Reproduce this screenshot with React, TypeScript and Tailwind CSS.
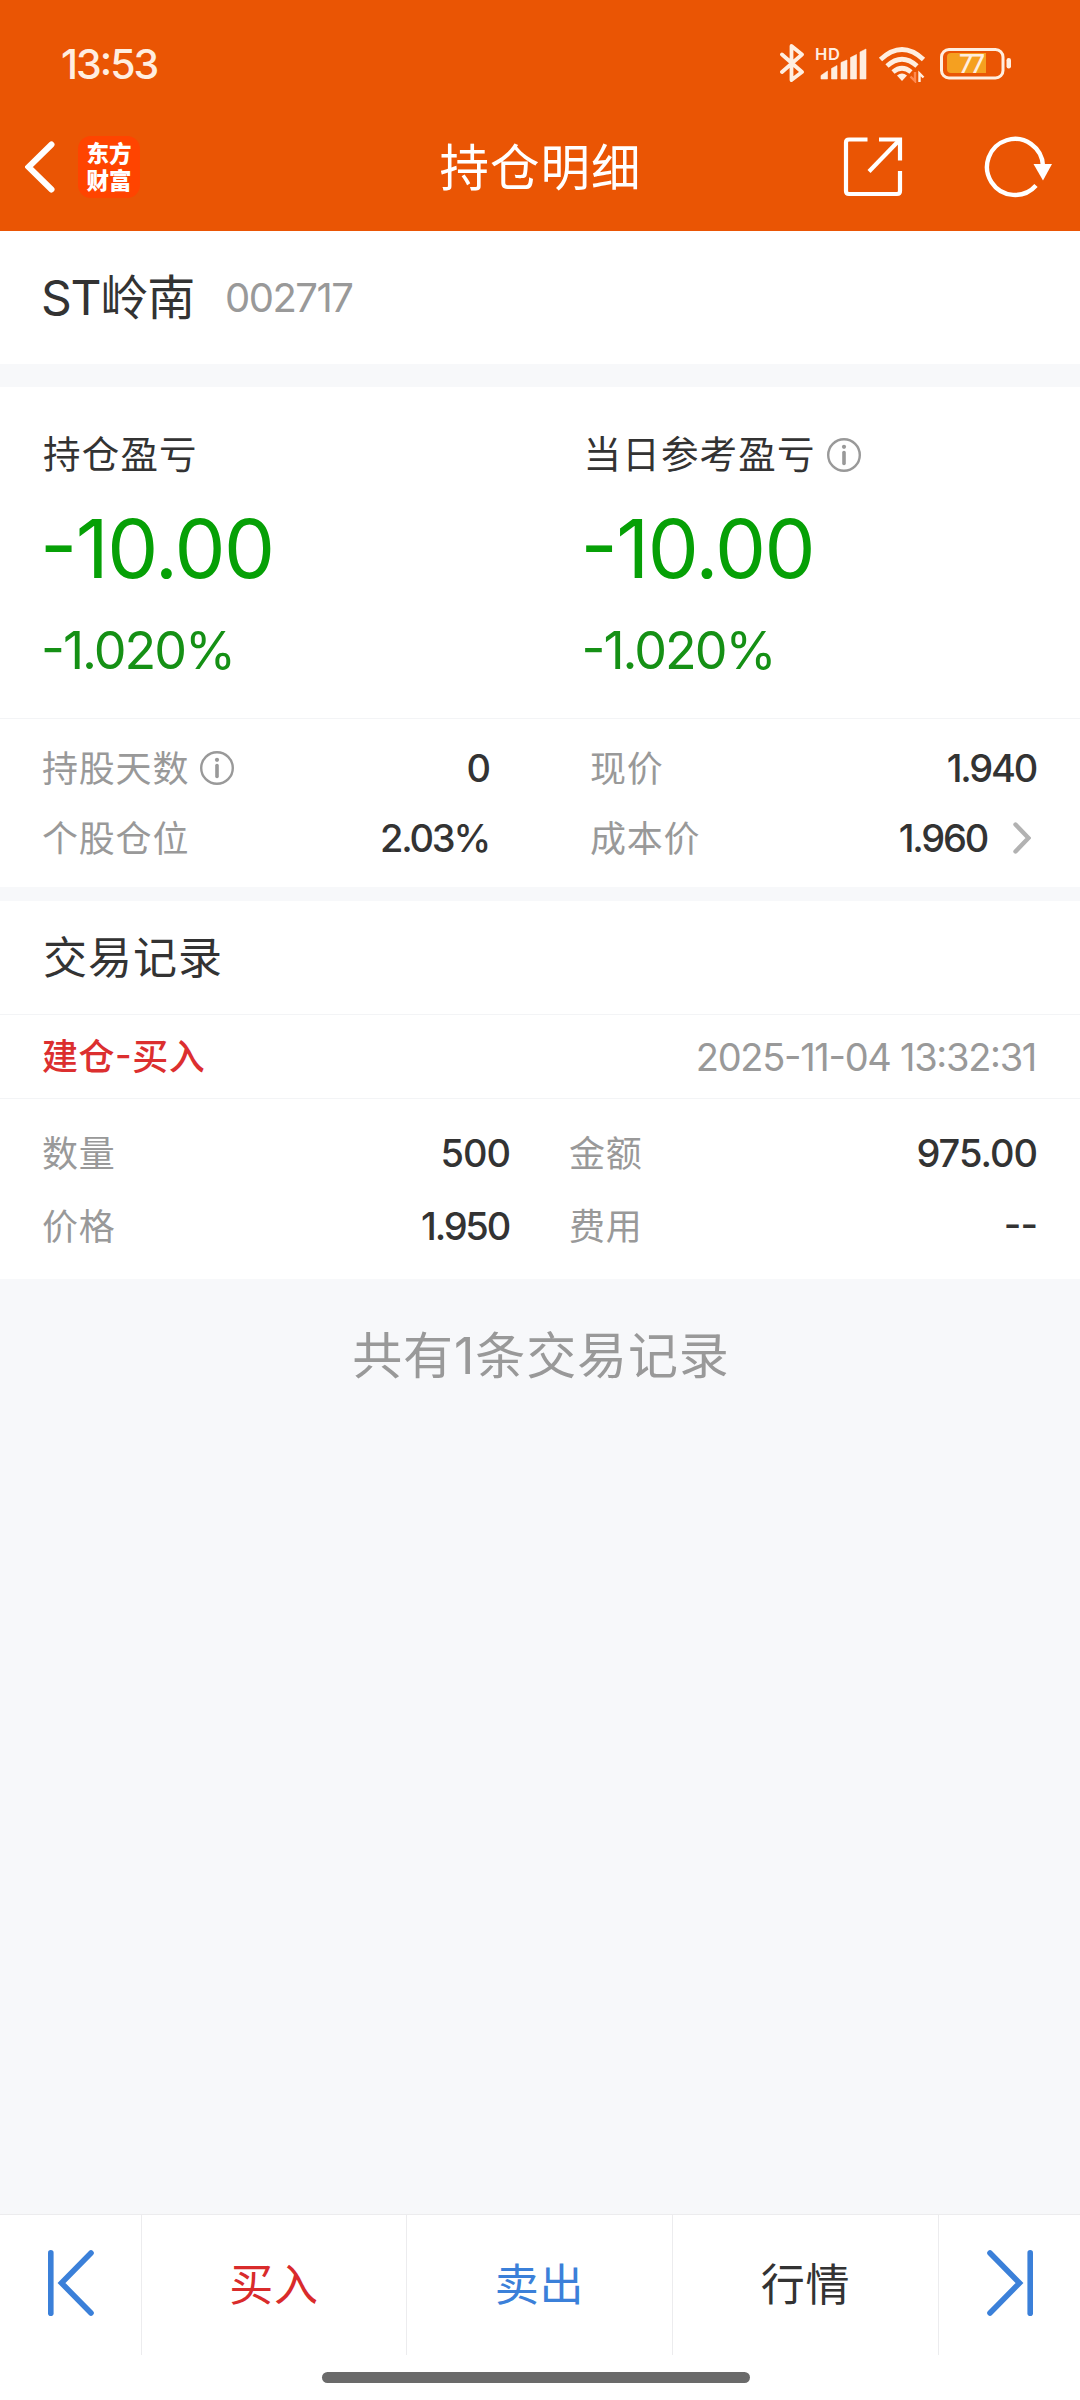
import type { ReactNode } from 'react';
import clsx from 'clsx';

const InfoIcon = () => (
  <svg className="w-[34px] h-[34px]" viewBox="0 0 34 34" fill="none">
    <circle cx="17" cy="17" r="15.8" stroke="#999" strokeWidth="2.4" />
    <circle cx="17" cy="8.8" r="2.1" fill="#999" />
    <path d="M17 14.5V25.5" stroke="#999" strokeWidth="3.6" strokeLinecap="round" />
  </svg>
);

const StatusIcons = () => (
  <svg className="w-[232px] h-[40px]" viewBox="780 43 232 40" fill="none">
    {/* Bluetooth */}
    <path
      d="M782 54.5L802 72L791.5 80V46L802 54.5L782 72"
      stroke="#ffeee0"
      strokeWidth="3.8"
      strokeLinecap="round"
      strokeLinejoin="round"
    />
    {/* Signal */}
    <text x="815" y="59.5" fill="#ffeee0" fontFamily="Inter, sans-serif" fontSize="16.5" fontWeight="600" textLength="25">
      HD
    </text>
    <path
      d="M821 79V75.5L827.5 71V79ZM831.5 79V68.5L837 65.5V79ZM841 79V62.5L847 60V79ZM850.5 79V57.5L856.5 54.5V79ZM860 79V52L866 49V79Z"
      fill="#ffeee0"
      stroke="#ffeee0"
      strokeWidth="0.6"
      strokeLinejoin="round"
    />
    {/* Wifi */}
    <g stroke="#ffeee0" strokeWidth="4.8">
      <path d="M880.5 59.5Q902 39.5 923.5 59.5" />
      <path d="M887 66Q902 52.5 917 66" />
      <path d="M893 72Q902 64.5 911 72" />
    </g>
    <path d="M897 75.5Q902 71.5 907 75.5L902 81Z" fill="#ffeee0" />
    <path d="M915 72V81L910.5 76.5" stroke="#ff8a50" strokeWidth="2.4" />
    <path d="M919.5 82V73.5L923.5 77.5" stroke="#ffeee0" strokeWidth="2.4" />
    {/* Battery */}
    <rect x="941.5" y="49.5" width="61.5" height="28.5" rx="7.5" stroke="#ffeee0" strokeWidth="3" />
    <path d="M986 53H951a4 4 0 0 0-4 4V69a4 4 0 0 0 4 4H986Z" fill="#f5a020" />
    <rect x="1006.5" y="58" width="4.5" height="10.5" rx="2.2" fill="#ffeee0" />
    <text x="959" y="73" fill="#ffeee0" fontFamily="Inter, sans-serif" fontSize="25" fontWeight="500" textLength="26">
      77
    </text>
  </svg>
);

const ShareIcon = () => (
  <svg className="w-[60px] h-[60px]" viewBox="843 137 60 60" fill="none" stroke="#fff" strokeWidth="4.2">
    <path d="M867.5 139.5H849Q846 139.5 846 142.5V191Q846 194 849 194H897Q900 194 900 191V171" />
    <path d="M879 139.5H900V160.5" />
    <path d="M899 140.5L869 171.5" />
  </svg>
);

const RefreshIcon = () => (
  <svg className="w-[68px] h-[62px]" viewBox="984 136 68 62" fill="none">
    <path d="M1036 185.5A28 28 0 1 1 1043 166" stroke="#fff" strokeWidth="4.4" />
    <path d="M1033.5 164H1052L1043 180.5Z" fill="#fff" />
  </svg>
);

const JumpIcon = ({ flip = false }: { flip?: boolean }) => (
  <svg
    className={flip ? 'w-[46px] h-[66px] -scale-x-100' : 'w-[46px] h-[66px]'}
    viewBox="0 0 46 66"
    fill="none"
    stroke="#3b80d9"
    strokeWidth="5.6"
    strokeLinecap="round"
  >
    <path d="M2.8 2.8V63.2" />
    <path d="M43 3L13.5 33L43 63" />
  </svg>
);

const profits = [
  { label: '持仓盈亏', amount: '-10.00', rate: '-1.020%', info: false },
  { label: '当日参考盈亏', amount: '-10.00', rate: '-1.020%', info: true },
];

const Label = ({ children }: { children: ReactNode }) => (
  <span className="pt-[2px] text-[36px] leading-none tracking-[0.8px] text-[#999]">{children}</span>
);

const Value = ({ children, tight = false }: { children: ReactNode; tight?: boolean }) => (
  <span
    className={clsx(
      'text-[38px] leading-none font-medium',
      tight ? 'tracking-[-2.2px] mr-px' : 'tracking-[-1px]'
    )}
  >
    {children}
  </span>
);

const App = () => {
  return (
    <div className="w-[1080px] h-[2400px] flex flex-col bg-[#f7f8fa] text-[#333] font-[Inter,'Noto_Sans_CJK_SC',sans-serif] [font-feature-settings:'case'] whitespace-nowrap overflow-hidden">
      {/* Status bar + navigation */}
      <header className="h-[231px] shrink-0 bg-[#ea5504] text-white">
        <div className="h-[104px] pt-[43px] pl-[61px] pr-[68px] flex justify-between">
          <span className="h-[42px] leading-[42px] text-[41px] font-medium text-[#ffeee0] tracking-[-2px]">13:53</span>
          <StatusIcons />
        </div>
        <div className="h-[125px] grid grid-cols-3 items-center pl-[25px] pr-[28px]">
          <div className="flex items-center gap-[23px]">
            <svg className="w-[30px] h-[52px]" viewBox="0 0 30 52" fill="none">
              <path d="M26.5 3.5L3.5 26L26.5 48.5" stroke="#fff" strokeWidth="6" strokeLinecap="round" />
            </svg>
            <div className="w-[62px] h-[62px] rounded-[13px] bg-[#ff4400] flex flex-col items-center justify-center text-[22.5px] leading-[27px] font-black">
              <span>东方</span>
              <span>财富</span>
            </div>
          </div>
          <h1 className="pt-[4px] pl-[4px] text-center text-[49.5px] leading-none tracking-[1px]">持仓明细</h1>
          <div className="flex items-center justify-end gap-[81px]">
            <ShareIcon />
            <RefreshIcon />
          </div>
        </div>
      </header>

      {/* Stock name */}
      <div className="h-[133px] shrink-0 bg-white flex items-center px-[41px]">
        <span className="text-[48px] leading-none tracking-[-1.2px]">ST岭南</span>
        <span className="ml-[31px] text-[40px] leading-none tracking-[-1.5px] text-[#999]">002717</span>
      </div>

      {/* Profit and loss */}
      <section className="mt-[23px] h-[331px] shrink-0 bg-white grid grid-cols-2 pl-[43px]">
        {profits.map((item, index) => (
          <div key={index} className={index === 0 ? 'pt-[48px]' : 'pt-[48px] pl-[22px]'}>
            <div className="flex items-center gap-[11px]">
              <span className="text-[37.5px] leading-[40px] tracking-[1.2px]">{item.label}</span>
              {item.info && <InfoIcon />}
            </div>
            <div className="mt-[34px] -ml-[3px] h-[80px] text-[81px] leading-[80px] text-[#06a006] tracking-[-1.5px]">
              {item.amount}
            </div>
            <div className="mt-[32px] -ml-[2px] h-[60px] text-[52px] leading-[60px] text-[#159015] tracking-[-2px]">
              {item.rate}
            </div>
          </div>
        ))}
      </section>

      {/* Position details */}
      <section className="h-[169px] shrink-0 bg-white border-t border-[#f3f4f6] pt-[14px] pl-[42px] pr-[43px] flex gap-[100px]">
        <div className="w-[448px] flex flex-col">
          <div className="h-[70px] flex items-center justify-between">
            <div className="flex items-center gap-[11px]">
              <Label>持股天数</Label>
              <InfoIcon />
            </div>
            <Value>0</Value>
          </div>
          <div className="h-[70px] flex items-center justify-between">
            <Label>个股仓位</Label>
            <Value tight>2.03%</Value>
          </div>
        </div>
        <div className="flex-1 flex flex-col">
          <div className="h-[70px] flex items-center justify-between">
            <Label>现价</Label>
            <Value tight>1.940</Value>
          </div>
          <div className="h-[70px] flex items-center justify-between">
            <Label>成本价</Label>
            <div className="flex items-center gap-[25px] pr-[6px]">
              <Value tight>1.960</Value>
              <svg className="w-[18px] h-[32px]" viewBox="0 0 18 32" fill="none">
                <path d="M2.5 2.5L15.5 16L2.5 29.5" stroke="#b2b2b2" strokeWidth="4.4" strokeLinecap="round" />
              </svg>
            </div>
          </div>
        </div>
      </section>

      {/* Trade records */}
      <section className="mt-[14px] shrink-0 bg-white">
        <h2 className="h-[113px] flex items-center pl-[43px] text-[44px] leading-none tracking-[1px]">交易记录</h2>
        <div className="h-[85px] border-y border-[#f3f4f6] pl-[42px] pr-[44px] flex items-center justify-between">
          <span className="pt-[1px] text-[36px] leading-none tracking-[0.5px] text-[#dc2f2f] font-medium">建仓-买入</span>
          <span className="text-[38px] leading-none tracking-[-1.3px] text-[#999]">2025-11-04 13:32:31</span>
        </div>
        <div className="h-[180px] pt-[17px] pl-[42px] pr-[43px] flex gap-[59px]">
          <div className="w-[468px] flex flex-col">
            <div className="h-[73px] flex items-center justify-between">
              <Label>数量</Label>
              <Value>500</Value>
            </div>
            <div className="h-[73px] flex items-center justify-between">
              <Label>价格</Label>
              <Value tight>1.950</Value>
            </div>
          </div>
          <div className="flex-1 flex flex-col">
            <div className="h-[73px] flex items-center justify-between">
              <Label>金额</Label>
              <Value>975.00</Value>
            </div>
            <div className="h-[73px] flex items-center justify-between">
              <Label>费用</Label>
              <Value>--</Value>
            </div>
          </div>
        </div>
      </section>

      <p className="mt-[51px] pl-[2px] text-center text-[50px] leading-[52px] tracking-[0.9px] text-[#999]">共有1条交易记录</p>

      {/* Bottom actions */}
      <footer className="mt-auto h-[186px] shrink-0 bg-white border-t border-[#ececee]">
        <div className="h-[140px] flex text-[44px] leading-none tracking-[0.8px]">
          <div className="w-[142px] border-r border-[#ececee] flex items-center justify-center pb-[4px]">
            <JumpIcon />
          </div>
          <button className="w-[265px] border-r border-[#ececee] text-[#d92b2b]">买入</button>
          <button className="w-[266px] border-r border-[#ececee] text-[#3b80d9]">卖出</button>
          <button className="w-[266px] border-r border-[#ececee]">行情</button>
          <div className="flex-1 flex items-center justify-center pb-[4px]">
            <JumpIcon flip />
          </div>
        </div>
        <div className="mt-[17px] ml-[322px] w-[428px] h-[11px] rounded-full bg-[#6a6a6a]" />
      </footer>
    </div>
  );
};

export default App;
